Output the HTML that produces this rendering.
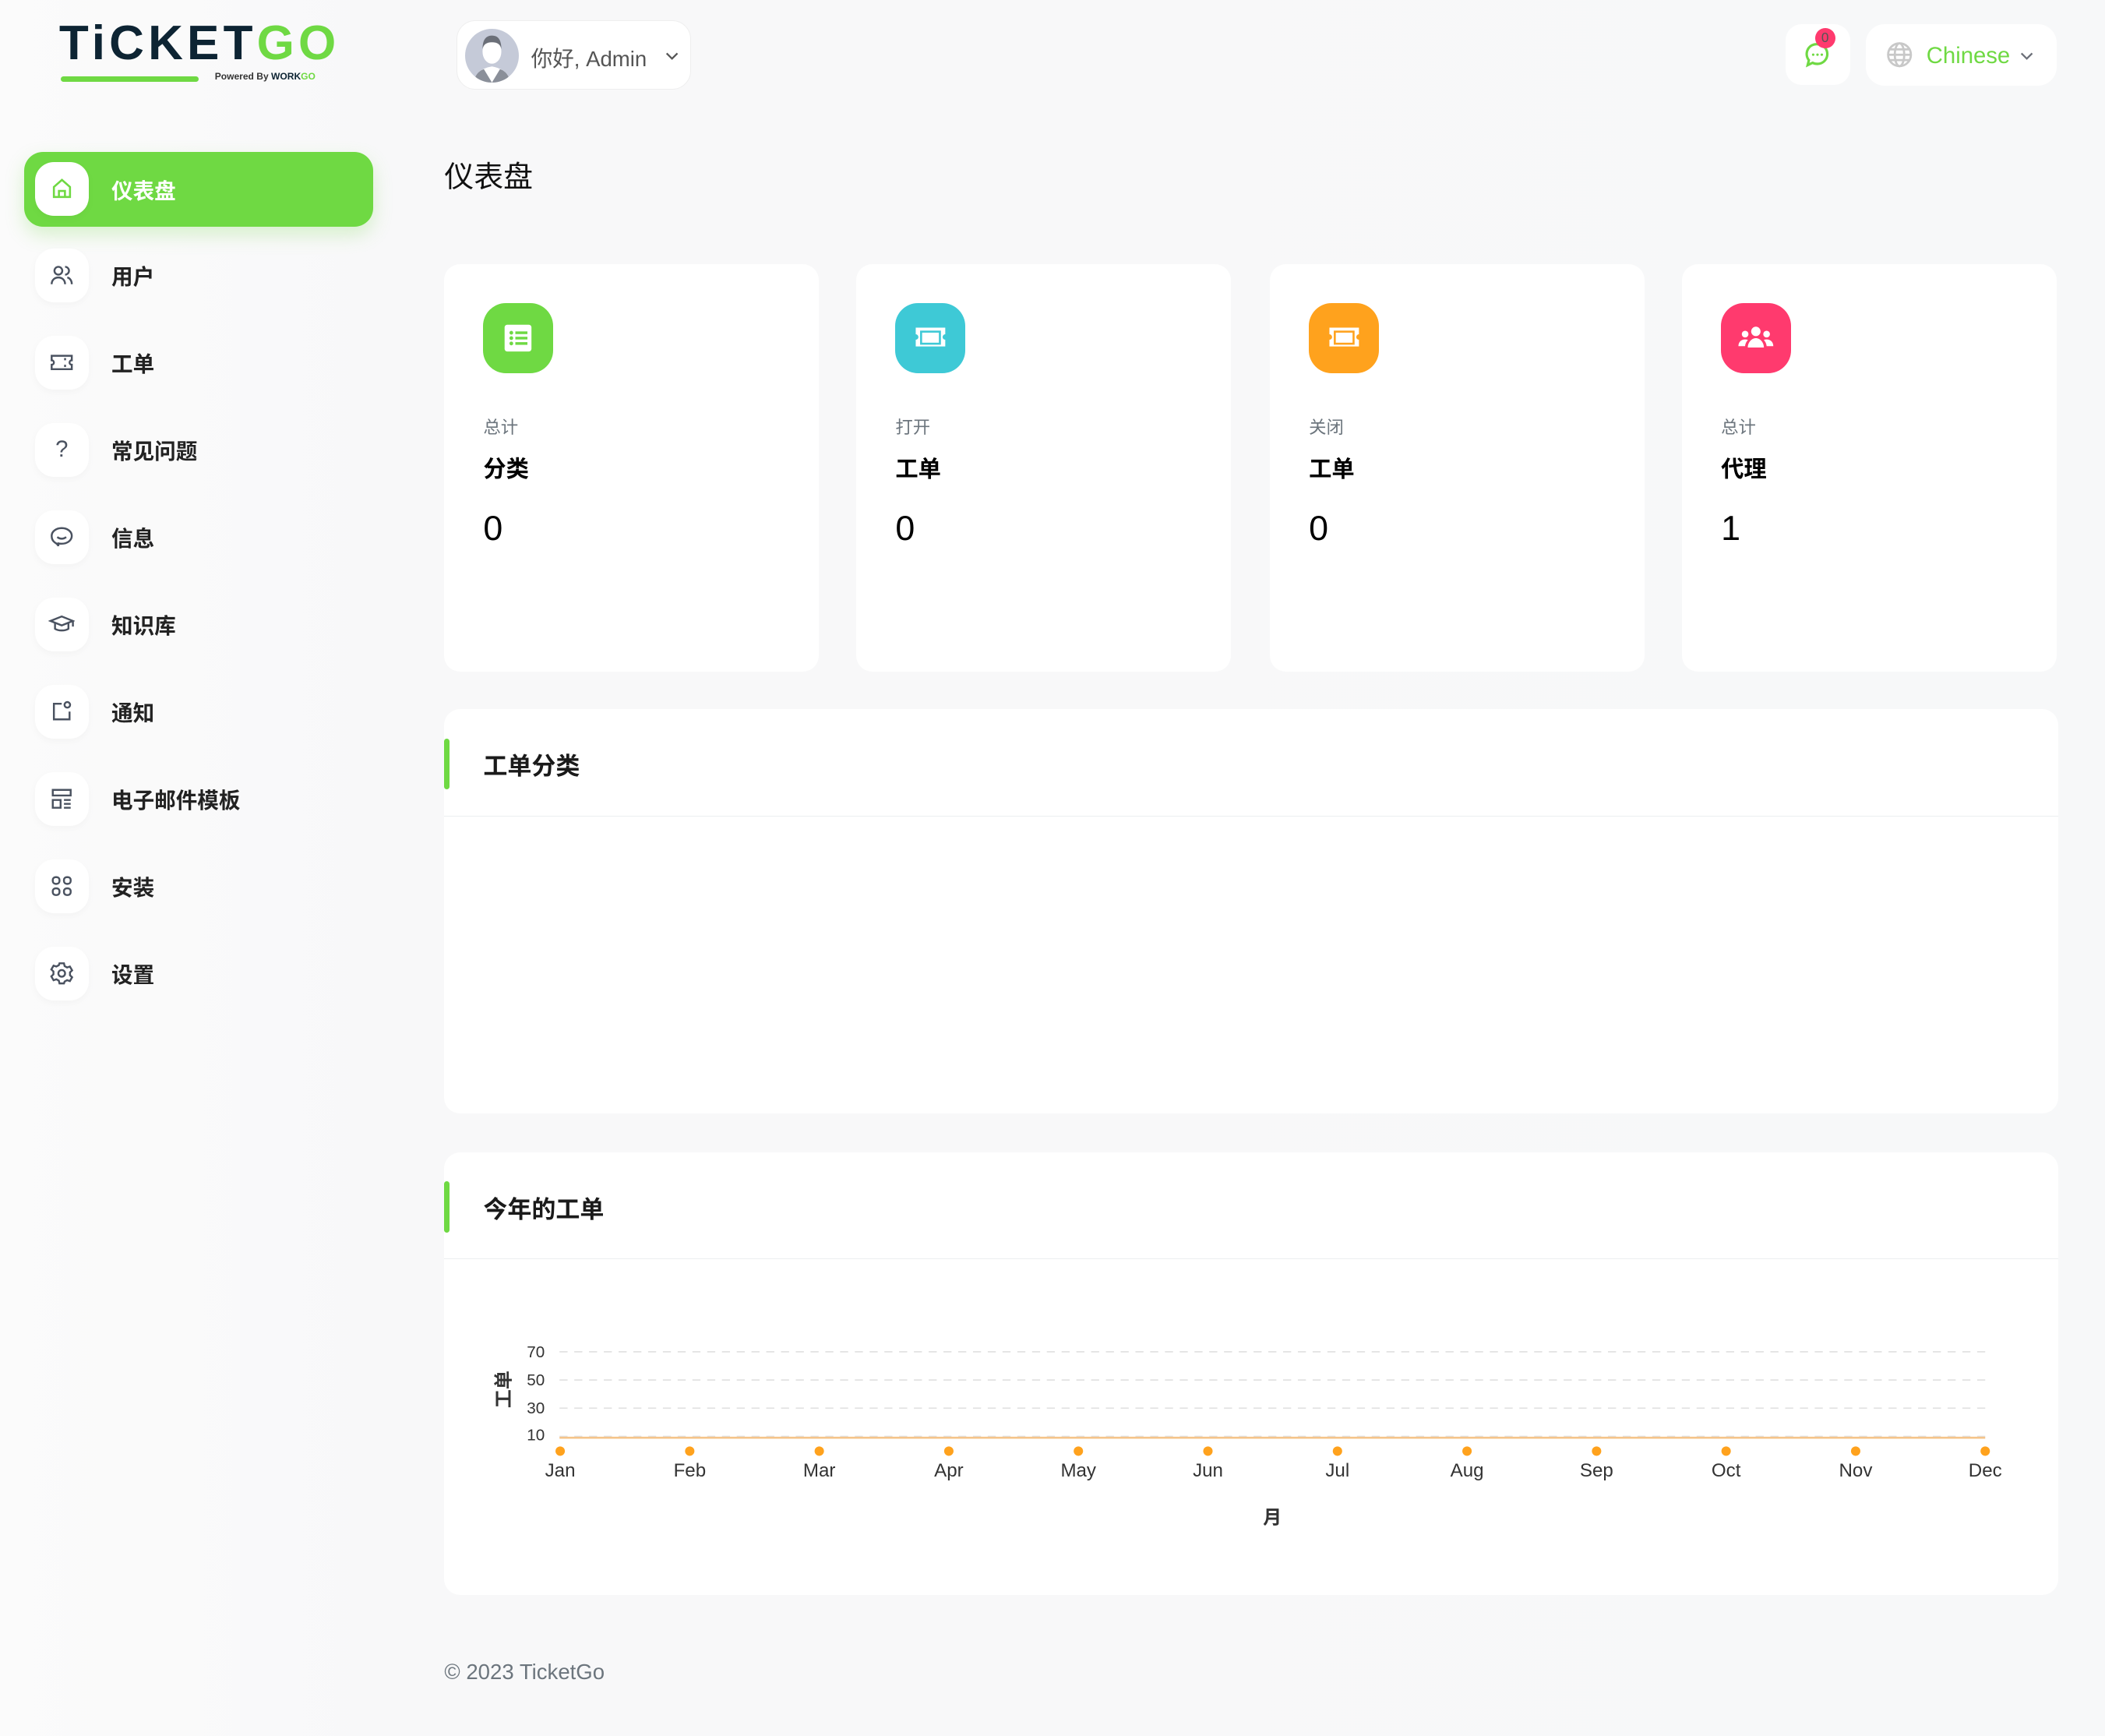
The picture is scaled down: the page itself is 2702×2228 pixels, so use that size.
<!DOCTYPE html>
<html><head><meta charset="utf-8">
<style>
*{margin:0;padding:0;box-sizing:border-box}
html,body{width:2702px;height:2228px;overflow:hidden}
body{background:#f6f7f8;font-family:"Liberation Sans","Noto Sans CJK SC",sans-serif;color:#1a1a1a}
#w{zoom:1.7232;width:1568px;height:1293px;position:relative;background:linear-gradient(90deg,#fbfbfb 0,#f8f8f9 300px,#f7f8f9 100%)}
.abs{position:absolute}
.nav{position:absolute;left:18px;width:260px;height:56px;display:flex;align-items:center}
.ib{position:absolute;left:8px;width:40px;height:40px;border-radius:14px;background:#fff;display:flex;align-items:center;justify-content:center;box-shadow:0 2px 6px rgba(0,0,0,.03)}
.nav span{position:absolute;left:65px;font-size:16px;font-weight:bold;color:#222}
.card{position:absolute;top:197px;width:279px;height:303px;background:#fff;border-radius:12px}
.ci{position:absolute;left:29px;top:29px;width:52px;height:52px;border-radius:17px;display:flex;align-items:center;justify-content:center}
.cs{position:absolute;left:29px;top:111px;font-size:13px;color:#6c757d}
.cb{position:absolute;left:29px;top:139px;font-size:17px;font-weight:bold;color:#000}
.cn{position:absolute;left:29px;top:182px;font-size:26px;color:#000}
.panel{position:absolute;left:331px;width:1202px;background:#fff;border-radius:12px}
.ph{height:80px;border-bottom:1px solid #eceef0;position:relative}
.ph:before{content:"";position:absolute;left:0;top:22px;width:4px;height:38px;background:#6fd943;border-radius:2px}
.ph b{position:absolute;left:29px;top:28px;font-size:18px}
svg text{font-family:"Liberation Sans","Noto Sans CJK SC",sans-serif}
</style></head><body><div id="w">
<!-- logo -->
<div class="abs" style="left:44px;top:13px;font-size:36px;font-weight:900;letter-spacing:3px;line-height:40px;color:#0d2433;font-family:'Liberation Sans',sans-serif">TiCKET<span style="color:#6fd943">GO</span></div>
<div class="abs" style="left:45px;top:57px;width:103px;height:4px;background:#6fd943;border-radius:2px"></div>
<div class="abs" style="left:160px;top:53px;font-size:7px;font-weight:bold;color:#333">Powered By <b style="color:#0d2433">WORK</b><b style="color:#6fd943">GO</b></div>
<!-- user -->
<div class="abs" style="left:340px;top:15px;width:175px;height:52px;background:#fff;border:1px solid #eee;border-radius:14px">
 <div class="abs" style="left:6px;top:6px;width:40px;height:40px;border-radius:50%;background:#c5cad8;overflow:hidden">
  <svg width="40" height="40"><ellipse cx="20" cy="17" rx="7" ry="9" fill="#fff"/><path d="M13 15q0-10 7-10t7 10q-1-5-7-5t-7 5z" fill="#6b6f78"/><path d="M6 40q2-10 14-12q12 2 14 12z" fill="#fff"/><path d="M6 40q2-8 8-10l6 10zM34 40q-2-8-8-10l-6 10z" fill="#8a8f99"/></svg>
 </div>
 <div class="abs" style="left:55px;top:15px;font-size:16px;color:#555">你好, Admin</div>
 <svg class="abs" style="left:155px;top:22px" width="10" height="8"><path d="M1 2l4 4 4-4" stroke="#555" stroke-width="1.3" fill="none"/></svg>
</div>
<!-- notif -->
<div class="abs" style="left:1330px;top:18px;width:48px;height:45px;background:#fff;border-radius:12px">
 <svg class="abs" style="left:13px;top:12px" width="22" height="22" viewBox="0 0 24 24"><path d="M12 3a8 8 0 0 1 0 16c-2 0-3-.4-4-.9L4 20l1-4a8 8 0 0 1 7-13z" stroke="#6fd943" stroke-width="2" fill="none"/><circle cx="8.5" cy="11.5" r="1" fill="#6fd943"/><circle cx="12" cy="11.5" r="1" fill="#6fd943"/><circle cx="15.5" cy="11.5" r="1" fill="#6fd943"/></svg>
 <div class="abs" style="left:22px;top:3px;width:15px;height:15px;border-radius:50%;background:#ff3a6e;font-size:10px;color:#555;text-align:center;line-height:15px">0</div>
</div>
<div class="abs" style="left:1390px;top:18px;width:142px;height:46px;background:#fff;border-radius:14px">
 <svg class="abs" style="left:15px;top:13px" width="20" height="20" viewBox="0 0 20 20"><g stroke="#c8c8c8" stroke-width="1.6" fill="none"><circle cx="10" cy="10" r="8.5"/><ellipse cx="10" cy="10" rx="3.5" ry="8.5"/><path d="M1.5 10h17M3 6h14M3 14h14"/></g></svg>
 <div class="abs" style="left:45px;top:14px;font-size:17px;color:#6fd943">Chinese</div>
 <svg class="abs" style="left:115px;top:20px" width="10" height="8"><path d="M1 2l4 4 4-4" stroke="#6b6f78" stroke-width="1.3" fill="none"/></svg>
</div>
<!-- sidebar -->
<div class="nav" style="top:113px;background:#6fd943;border-radius:14px;box-shadow:0 6px 14px rgba(111,217,67,.25)">
 <div class="ib"><svg width="18" height="18" viewBox="0 0 24 24"><path d="M4 10l8-7 8 7v10H4zM9 20v-6h6v6" stroke="#6fd943" stroke-width="2" fill="none"/></svg></div>
 <span style="color:#fff">仪表盘</span></div>
<div class="nav" style="top:177px"><div class="ib"><svg width="20" height="20" viewBox="0 0 24 24" stroke="#4a5260" stroke-width="1.7" fill="none"><circle cx="9" cy="8" r="3.5"/><path d="M3 20c0-4 3-6 6-6s6 2 6 6M15 4.5a3.5 3.5 0 0 1 0 7M17 14c2 .5 4 2.5 4 6"/></svg></div><span>用户</span></div>
<div class="nav" style="top:242px"><div class="ib"><svg width="20" height="20" viewBox="0 0 24 24" stroke="#4a5260" stroke-width="1.7" fill="none"><path d="M3 6h18v4a2 2 0 0 0 0 4v4H3v-4a2 2 0 0 0 0-4z M15 8v2M15 14v2"/></svg></div><span>工单</span></div>
<div class="nav" style="top:307px"><div class="ib" style="font-size:17px;color:#4a5260">?</div><span>常见问题</span></div>
<div class="nav" style="top:372px"><div class="ib"><svg width="20" height="20" viewBox="0 0 24 24" stroke="#4a5260" stroke-width="1.7" fill="none"><path d="M12 4c5 0 9 3 9 7s-4 7-9 7c-1 0-2 0-3-.3L9 20q-1-2-3-3c-2-1.3-3-3.5-3-6 0-4 4-7 9-7zM8 12q4 3 8 0"/></svg></div><span>信息</span></div>
<div class="nav" style="top:437px"><div class="ib"><svg width="20" height="20" viewBox="0 0 24 24" stroke="#4a5260" stroke-width="1.7" fill="none"><path d="M2 9l10-4 10 4-10 4zM6 11v5c3 2 9 2 12 0v-5M22 9v5"/></svg></div><span>知识库</span></div>
<div class="nav" style="top:502px"><div class="ib"><svg width="20" height="20" viewBox="0 0 24 24" stroke="#4a5260" stroke-width="1.7" fill="none"><path d="M12 5H5v14h14v-7"/><circle cx="17" cy="6" r="2.5"/></svg></div><span>通知</span></div>
<div class="nav" style="top:567px"><div class="ib"><svg width="20" height="20" viewBox="0 0 24 24" stroke="#4a5260" stroke-width="1.7" fill="none"><path d="M4 4h16v5H4zM4 13h7v7H4zM14 13h6M14 16.5h6M14 20h6"/></svg></div><span>电子邮件模板</span></div>
<div class="nav" style="top:632px"><div class="ib"><svg width="20" height="20" viewBox="0 0 24 24" stroke="#4a5260" stroke-width="1.7" fill="none"><rect x="4" y="4" width="6" height="6" rx="2.5"/><rect x="14" y="4" width="6" height="6" rx="2.5"/><rect x="4" y="14" width="6" height="6" rx="2.5"/><rect x="14" y="14" width="6" height="6" rx="2.5"/></svg></div><span>安装</span></div>
<div class="nav" style="top:697px"><div class="ib"><svg width="20" height="20" viewBox="0 0 24 24" stroke="#4a5260" stroke-width="1.7" fill="none"><circle cx="12" cy="12" r="3"/><path d="M10 3h4l.6 2.5 2.2 1.2 2.5-.8 2 3.4-1.9 1.8v2.6l1.9 1.8-2 3.4-2.5-.8-2.2 1.2L14 21h-4l-.6-2.5-2.2-1.2-2.5.8-2-3.4 1.9-1.8v-2.6L2.7 8.5l2-3.4 2.5.8 2.2-1.2z"/></svg></div><span>设置</span></div>
<!-- title -->
<div class="abs" style="left:331px;top:114px;font-size:22px;color:#111">仪表盘</div>
<!-- cards -->
<div class="card" style="left:331px"><div class="ci" style="background:#6fd943"><svg width="22" height="22" viewBox="0 0 22 22"><rect x="1" y="1" width="20" height="20" rx="2" fill="#fff"/><g fill="#6fd943"><circle cx="6" cy="7" r="1.4"/><circle cx="6" cy="11" r="1.4"/><circle cx="6" cy="15" r="1.4"/><rect x="9" y="6" width="9" height="2"/><rect x="9" y="10" width="9" height="2"/><rect x="9" y="14" width="9" height="2"/></g></svg></div><div class="cs">总计</div><div class="cb">分类</div><div class="cn">0</div></div>
<div class="card" style="left:638px"><div class="ci" style="background:#3ec9d6"><svg width="26" height="20" viewBox="0 0 26 20"><path d="M2 2h22v5a2 2 0 0 0 0 4v5H2v-5a2 2 0 0 0 0-4z" fill="#fff"/><rect x="6" y="5" width="14" height="9" fill="none" stroke="#3ec9d6" stroke-width="1.5"/></svg></div><div class="cs">打开</div><div class="cb">工单</div><div class="cn">0</div></div>
<div class="card" style="left:946px"><div class="ci" style="background:#ffa21d"><svg width="26" height="20" viewBox="0 0 26 20"><path d="M2 2h22v5a2 2 0 0 0 0 4v5H2v-5a2 2 0 0 0 0-4z" fill="#fff"/><rect x="6" y="5" width="14" height="9" fill="none" stroke="#ffa21d" stroke-width="1.5"/></svg></div><div class="cs">关闭</div><div class="cb">工单</div><div class="cn">0</div></div>
<div class="card" style="left:1253px"><div class="ci" style="background:#ff3a6e"><svg width="30" height="22" viewBox="0 0 30 22" fill="#fff"><circle cx="15" cy="6" r="3.5"/><circle cx="7" cy="8" r="2.5"/><circle cx="23" cy="8" r="2.5"/><path d="M9 18c0-4 3-7 6-7s6 3 6 7z M2 17c0-3 2-5 5-5 1 0 2 .3 2 .5-1 1-2 3-2 4.5z M28 17c0-3-2-5-5-5-1 0-2 .3-2 .5 1 1 2 3 2 4.5z"/></svg></div><div class="cs">总计</div><div class="cb">代理</div><div class="cn">1</div></div>
<!-- panels -->
<div class="panel" style="top:528px;height:301px"><div class="ph"><b>工单分类</b></div></div>
<div class="panel" style="top:858px;height:330px"><div class="ph"><b>今年的工单</b></div></div>
<svg class="abs" style="left:331px;top:938px" width="1202" height="250">
 <g stroke="#e2e2e2" stroke-dasharray="6 5" stroke-width="1"><line x1="86" y1="69" x2="1148" y2="69"/><line x1="86" y1="90" x2="1148" y2="90"/><line x1="86" y1="111" x2="1148" y2="111"/><line x1="86" y1="132" x2="1148" y2="132"/></g>
 <line x1="86" y1="133" x2="1148" y2="133" stroke="#f5c48a" stroke-width="1.5"/>
 <g font-size="12" fill="#333" text-anchor="end"><text x="75" y="73">70</text><text x="75" y="94">50</text><text x="75" y="115">30</text><text x="75" y="135">10</text></g>
 <text transform="translate(49,97) rotate(-90)" font-size="14" font-weight="bold" fill="#333" text-anchor="middle">工单</text>
 <g fill="#ffa21d">
 <circle cx="86.5" cy="143" r="3.5"/><circle cx="183" cy="143" r="3.5"/><circle cx="279.5" cy="143" r="3.5"/><circle cx="376" cy="143" r="3.5"/><circle cx="472.5" cy="143" r="3.5"/><circle cx="569" cy="143" r="3.5"/><circle cx="665.5" cy="143" r="3.5"/><circle cx="762" cy="143" r="3.5"/><circle cx="858.5" cy="143" r="3.5"/><circle cx="955" cy="143" r="3.5"/><circle cx="1051.5" cy="143" r="3.5"/><circle cx="1148" cy="143" r="3.5"/></g>
 <g font-size="14" fill="#333" text-anchor="middle"><text x="86.5" y="162">Jan</text><text x="183" y="162">Feb</text><text x="279.5" y="162">Mar</text><text x="376" y="162">Apr</text><text x="472.5" y="162">May</text><text x="569" y="162">Jun</text><text x="665.5" y="162">Jul</text><text x="762" y="162">Aug</text><text x="858.5" y="162">Sep</text><text x="955" y="162">Oct</text><text x="1051.5" y="162">Nov</text><text x="1148" y="162">Dec</text></g>
 <text x="617" y="197" font-size="14" font-weight="bold" fill="#333" text-anchor="middle">月</text>
</svg>
<div class="abs" style="left:331px;top:1236px;font-size:16px;color:#6c757d">© 2023 TicketGo</div>
</div></body></html>
